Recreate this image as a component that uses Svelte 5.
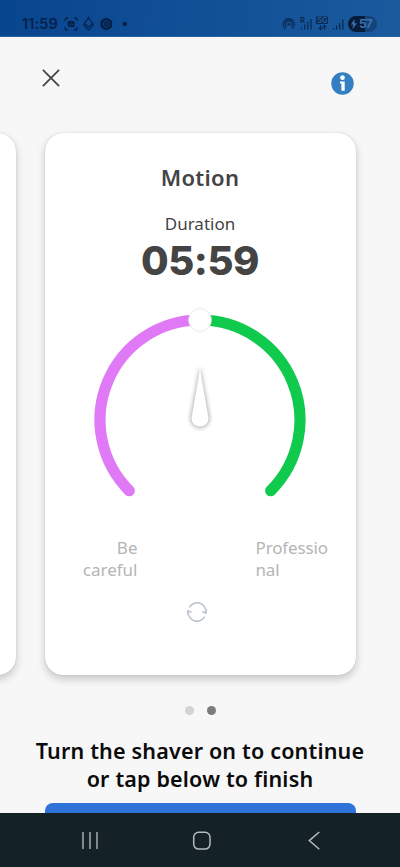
<script>
  let duration = $state('05:59');
  const pages = ['Pressure', 'Motion'];
  let active = $state(1);
</script>

<div class="screen">
  <header class="status">
    <span class="clock">11:59</span>
    <svg class="left-icons" width="70" height="16" viewBox="0 0 70 16" fill="none" stroke="#062149" stroke-width="1.3">
      <path d="M1.200 5V3.600Q1.200 2 2.800 2H4M10 2h1.300Q13 2 13 3.600V5M13 11v1.400Q13 14 11.300 14H10M4 14H2.800Q1.200 14 1.200 12.400V11" />
      <rect x="3.800" y="5" width="6.800" height="6" rx="1.300" fill="#062149" stroke="none" />
      <path d="M5.200 9.400l2-1.600 2 .8" stroke="#0c438a" stroke-width="1" />
      <path d="M24.500 1.500C26 5 29.300 6.500 29.300 9L24.500 14.300 19.700 9C19.700 6.500 23 5 24.500 1.500ZM20.500 7.500L24.500 11.300 28.500 7.500" stroke-width="1.100" />
      <path d="M42.300 1.800l5.300 3.100v6.200l-5.300 3.100-5.300-3.100V4.900Z" fill="#062149" stroke-width="1" />
      <circle cx="42.300" cy="8" r="3.100" stroke="#0c438a" stroke-width=".8" />
      <path d="M41.500 6.600l2 1.400-2 1.400Z" fill="#0c438a" stroke="none" />
      <circle cx="60.800" cy="8" r="2.200" fill="#062149" stroke="none" />
    </svg>
    <svg class="right-icons" width="63" height="16" viewBox="0 0 63 16" fill="none" stroke="#082a56" stroke-width="1.300">
      <path d="M3.300 12.700a5.600 5.600 0 1 1 7 0M4.600 10.500a3.300 3.300 0 1 1 4.400 0" />
      <circle cx="6.800" cy="8.300" r="1.200" fill="#082a56" stroke="none" />
      <path d="M19.500 11.500v2M22.700 8.500v5M25.900 5.500v8M29 3v10.500" />
      <rect x="34" y=".5" width="12" height="7.500" rx="1" fill="#082a56" stroke="none" />
      <path d="M38.500 9v4.500m-2-1.800 2 2 2-2M42.500 14V9.300m-2 2 2-2 2 2" stroke-width="1.100" />
      <path d="M51.500 12v1.500M54.600 9.500v4M57.700 7v6.500M60.900 3.500v10" />
      <text x="18" y="7" class="tiny">R</text>
      <text x="35" y="6.900" class="tiny five">5G</text>
    </svg>
    <div class="battery">
      <svg width="8" height="10" viewBox="0 0 8 10"><path d="M4.500 0L1 5.500h2.200L2.500 10 7 4.200H4.400Z" fill="#3c71ab" /></svg>
      <span>57</span>
    </div>
  </header>

  <main>
    <div class="toolbar">
      <button class="close" aria-label="Close">
        <svg width="18" height="18" viewBox="0 0 18 18"><path d="M.9.900 17.100 17.100M17.100.900.900 17.100" stroke="#3f4143" stroke-width="1.700" /></svg>
      </button>
      <button class="info" aria-label="Information">
        <svg width="23" height="23" viewBox="0 0 23 23">
          <circle cx="11.500" cy="11.500" r="11.200" fill="#347fc1" />
          <circle cx="11.500" cy="5.700" r="2.350" fill="#fff" />
          <path d="M9 9.500h4.700v9.300h-3.300v-7.300H9Z" fill="#fff" />
        </svg>
      </button>
    </div>

    <div class="carousel">
      <section class="card previous"></section>
      <section class="card current">
        <h1>Motion</h1>
        <div class="label">Duration</div>
        <div class="time">{duration}</div>
        <svg class="gauge" width="240" height="210" viewBox="80 300 240 210">
          <defs>
            <filter id="soft" x="-60%" y="-20%" width="220%" height="140%">
              <feGaussianBlur stdDeviation="2" />
            </filter>
          </defs>
          <g fill="none" stroke-width="11.200" stroke-linecap="round">
            <path d="M129.300 490.700A100 100 0 0 1 200 320" stroke="#e079f6" />
            <path d="M200 320A100 100 0 0 1 270.700 490.700" stroke="#10ca4d" />
          </g>
          <circle cx="200" cy="320" r="11.400" fill="#fff" stroke="#e3e3e3" stroke-width=".8" />
          <path d="M200 369L191 417.500C190 430.500 210 430.500 209 417.500Z" fill="#999" stroke="#999" filter="url(#soft)" opacity=".8" />
          <path d="M200 369L191.600 417.500C190.500 429.500 209.500 429.500 208.400 417.500Z" fill="#fff" />
        </svg>
        <div class="feedback">
          <span class="careful">Be<br />careful</span>
          <span class="pro">Professional</span>
        </div>
        <svg class="refresh" width="22" height="22" viewBox="0 0 22 22" fill="none" stroke="#b6c1cc" stroke-width="1.500">
          <path d="M3.200 6.500A9 9 0 0 1 20 12M16.400 10.500 19.900 12.100 20.400 8.500M18.800 15.500A9 9 0 0 1 2 10M5.600 11.400 2 9.900 1.600 13.400" />
        </svg>
      </section>
    </div>

    <div class="dots">
      {#each pages as page, i (page)}
        <i class:active={i === active}></i>
      {/each}
    </div>
    <p class="prompt">Turn the shaver on to continue<br />or tap below to finish</p>
    <button class="finish" aria-label="Finish"></button>
  </main>

  <nav>
    <svg width="400" height="54" viewBox="0 0 400 54" fill="none" stroke="#b5babc" stroke-width="1.500">
      <path d="M83 19v17M90 19v17M97 19v17" stroke="#a5abad" />
      <rect x="193.700" y="19.300" width="16.300" height="16.800" rx="5" />
      <path d="M319.300 19 309.300 27.600 319.300 36.200" />
    </svg>
  </nav>
</div>

<style>
  :global(body) { background: #f7f7f7; overflow: hidden; }
  .screen {
    width: 400px;
    height: 867px;
    display: flex;
    flex-direction: column;
    overflow: hidden;
    background: #f7f7f7;
    font-family: "Noto Sans", "Open Sans", sans-serif;
    color: #444;
  }
  button { border: 0; padding: 0; background: none; display: block; }
  .status {
    flex: none;
    box-sizing: border-box;
    height: 37px;
    padding: 11px 0 0 22px;
    display: flex;
    align-items: flex-start;
    background: linear-gradient(100deg, #08458f, #1b5a9d);
    border-bottom: 1px solid #24639f;
  }
  .clock {
    width: 42px;
    font: 600 14.500px/26px Inter, sans-serif;
    letter-spacing: .1px;
    color: #062149;
  }
  .left-icons { margin-top: 5px; }
  .right-icons { margin: 5px 0 0 148px; }
  .tiny { font: 700 7.500px Inter, sans-serif; fill: #082a56; stroke: none; }
  .five { fill: #235e9b; }
  .battery {
    margin: 5px 0 0 3px;
    width: 29px;
    height: 16px;
    border-radius: 8px;
    display: flex;
    align-items: center;
    box-sizing: border-box;
    padding-left: 2px;
    background: linear-gradient(90deg, #071c39 58%, #134479 58%);
    font: 700 12px/16px Inter, sans-serif;
    letter-spacing: -.8px;
    color: #3c71ab;
  }
  .battery span { margin-left: 1px; }
  main { flex: none; height: 776px; overflow: hidden; }
  .toolbar {
    height: 95px;
    box-sizing: border-box;
    padding: 31.500px 46px 0 42px;
    display: flex;
    justify-content: space-between;
  }
  .close, .info { height: 23px; }
  .close { display: flex; align-items: flex-start; }
  .info { margin-top: 3.500px; }
  .toolbar svg { display: block; }
  .carousel { display: flex; gap: 29px; margin-left: -295.500px; width: 652px; height: 543px; padding-top: .5px; box-sizing: border-box; }
  .card {
    flex: none;
    width: 311px;
    height: 542px;
    border-radius: 18px;
    background: #fff;
    box-shadow: 0 0 1px rgba(0, 0, 0, .25), 0 4px 9px rgba(0, 0, 0, .2);
  }
  .current { display: flex; flex-direction: column; align-items: center; }
  h1 { margin: 29.500px 0 0; font-size: 22px; line-height: 30px; font-weight: 600; letter-spacing: .3px; }
  .label { margin-top: 20px; font-size: 17px; line-height: 24px; }
  .time {
    margin-top: 4.500px;
    font: 800 40px/40px Inter, "Noto Sans", sans-serif;
    font-feature-settings: "calt" 0;
    letter-spacing: -.5px;
  }
  .gauge { display: block; margin-top: 19.500px; }
  .feedback {
    align-self: stretch;
    display: flex;
    margin-top: 26.500px;
    height: 44.500px;
    font-size: 17px;
    line-height: 22px;
    font-weight: 400;
    color: #b5b5b5;
  }
  .careful { width: 93px; text-align: right; }
  .pro { margin-left: 118px; width: 78px; word-break: break-all; letter-spacing: -.15px; }
  .refresh { display: block; margin: 20px 0 0 -6px; }
  .dots { height: 9px; margin-top: 31px; display: flex; justify-content: center; gap: 13px; }
  .dots i { width: 9px; height: 9px; border-radius: 50%; background: #d3d3d3; }
  .dots .active { background: #7b7b7b; }
  .prompt {
    margin: 21.500px 0 0;
    text-align: center;
    white-space: nowrap;
    font-size: 21.500px;
    line-height: 28.500px;
    font-weight: 600;
    letter-spacing: .18px;
    color: #0b0b0b;
  }
  .finish { width: 311px; height: 48px; margin: 9.500px auto 0 44.600px; border-radius: 8px; background: #2f73da; }
  nav { flex: none; height: 54px; background: #142127; }
  nav svg { display: block; }
</style>
